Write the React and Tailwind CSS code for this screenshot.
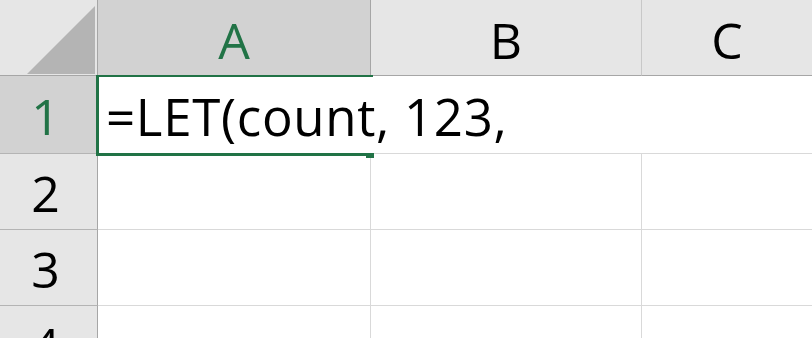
import React from 'react'

const rows = [
  { n: '1', h: 'h-[78px]', active: true },
  { n: '2', h: 'h-[76px]' },
  { n: '3', h: 'h-[76px]' },
  { n: '4', h: 'h-[76px]' },
]

const App = () => {
  return (
    <div className="relative w-[812px] h-[338px] overflow-hidden bg-white font-['Open_Sans',sans-serif] text-[50px] leading-none text-black">
      <div className="grid grid-cols-[98px_273px_271px_1fr]">
        {/* Column headers */}
        <div className="relative h-[76px] bg-[#e6e6e6] border-r border-b border-[#a6a6a6]">
          <svg className="absolute left-0 top-0" width="97" height="75" viewBox="0 0 97 75">
            <polygon points="27,74 95,6 95,74" fill="#b4b4b4" />
          </svg>
        </div>
        <div className="h-[76px] flex items-center justify-center pt-[5px] bg-[#d2d2d2] text-[#217346] border-r border-b border-[#a6a6a6]">
          A
        </div>
        <div className="h-[76px] flex items-center justify-center pt-[5px] bg-[#e6e6e6] border-r border-r-[#c8c8c8] border-b border-b-[#a6a6a6]">
          B
        </div>
        <div className="h-[76px] flex items-center justify-center pt-[5px] bg-[#e6e6e6] border-b border-[#a6a6a6]">
          C
        </div>

        {/* Rows */}
        {rows.map((r) => (
          <React.Fragment key={r.n}>
            <div
              className={`${r.h} flex items-center justify-center pr-[6px] pt-[3px] border-r border-r-[#a6a6a6] border-b border-b-[#b4b4b4] ${
                r.active ? 'bg-[#d2d2d2] text-[#217346]' : 'bg-[#e6e6e6]'
              }`}
            >
              {r.n}
            </div>
            {r.active ? (
              <>
                <div className={`${r.h} relative z-10 flex items-center pl-[8px] pt-[3px] text-[51px] tracking-[0.7px] border-b border-[#d9d9d9] whitespace-nowrap overflow-visible`}>
                  =LET(count, 123,
                </div>
                <div className={`${r.h} border-b border-[#d9d9d9]`} />
                <div className={`${r.h} border-b border-[#d9d9d9]`} />
              </>
            ) : (
              <>
                <div className={`${r.h} border-r border-b border-[#d9d9d9]`} />
                <div className={`${r.h} border-r border-b border-[#d9d9d9]`} />
                <div className={`${r.h} border-b border-[#d9d9d9]`} />
              </>
            )}
          </React.Fragment>
        ))}
      </div>

      {/* Active cell selection */}
      <div className="pointer-events-none absolute left-[96px] top-[75px] w-[277px] h-[78px] border-l-[3px] border-t-[2px] border-[#217346] z-20" />
      <div className="pointer-events-none absolute left-[96px] top-[153px] w-[270px] h-[3px] bg-[#217346] z-20" />
      <div className="pointer-events-none absolute left-[366px] top-[153px] w-[8px] h-[5px] bg-[#217346] z-20" />
    </div>
  )
}

export default App
